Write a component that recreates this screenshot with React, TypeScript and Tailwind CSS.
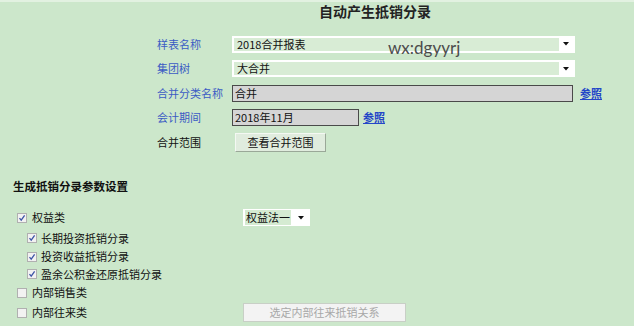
import React from "react";

function Check({ checked }: { checked?: boolean }) {
  return (
    <span className="w-[10px] h-[10px] border border-[#b0b0b0] bg-[#f2f2f2] flex items-center justify-center shrink-0">
      {checked && (
        <svg width="8" height="8" viewBox="0 0 8 8">
          <path d="M1.5 4.2 L3.2 6.2 L6.6 1.4" stroke="#3d55a6" strokeWidth="1.3" fill="none" />
        </svg>
      )}
    </span>
  );
}

function Arrow() {
  return (
    <svg width="6" height="4" viewBox="0 0 6 4">
      <path d="M0 0 L6 0 L3 3.5 Z" fill="#111" />
    </svg>
  );
}

function Select({ text, w }: { text: string; w: string }) {
  return (
    <div className={`${w} h-[17px] border-2 border-white bg-[#d8ecd5] flex items-center`}>
      <span className="flex-1 pl-[3px] text-[11px] leading-none text-[#111]">{text}</span>
      <span className="w-[14px] h-full bg-white flex items-center justify-center">
        <Arrow />
      </span>
    </div>
  );
}

function Label({ children, blue = true }: { children: React.ReactNode; blue?: boolean }) {
  return (
    <span className={`w-[75px] text-[11px] leading-none ${blue ? "text-[#3b5bc4]" : "text-[#111]"}`}>{children}</span>
  );
}

export default function App() {
  return (
    <div className="relative w-[634px] h-[326px] overflow-hidden bg-[#cce7cb] font-['Noto_Sans_CJK_SC','Liberation_Sans',sans-serif] text-[#111]">
      <div className="h-[2px] bg-[#e2f1e1]" />
      <div className="h-[18px] flex items-center pl-[319px] text-[14px] font-bold text-[#222] leading-none">
        自动产生抵销分录
      </div>
      <div className="h-[12px]" />
      <div className="pl-[157px]">
        <div className="h-[24px] flex items-center">
          <Label>样表名称</Label>
          <Select text="2018合并报表" w="w-[343px]" />
        </div>
        <div className="h-[25px] flex items-center">
          <Label>集团树</Label>
          <Select text="大合并" w="w-[343px]" />
        </div>
        <div className="h-[24px] flex items-center">
          <Label>合并分类名称</Label>
          <div className="w-[341px] h-[17px] border border-[#4a4a4a] bg-[#d5d5d5] flex items-center pl-[2px] text-[11px] leading-none">
            合并
          </div>
          <span className="ml-[7px] text-[11px] leading-none text-[#2446c8] underline font-bold">参照</span>
        </div>
        <div className="h-[25px] flex items-center">
          <Label>会计期间</Label>
          <div className="w-[127px] h-[17px] border border-[#4a4a4a] bg-[#d5d5d5] flex items-center pl-[2px] text-[11px] leading-none">
            2018年11月
          </div>
          <span className="ml-[4px] text-[11px] leading-none text-[#2446c8] underline font-bold">参照</span>
        </div>
        <div className="h-[24px] flex items-center">
          <Label blue={false}>合并范围</Label>
          <div className="ml-[3px] w-[91px] h-[19px] border border-t-[#f4f8f3] border-l-[#f4f8f3] border-r-[#9aa898] border-b-[#9aa898] bg-[#e0ecde] flex items-center justify-center text-[11px] leading-none">
            查看合并范围
          </div>
        </div>
      </div>
      <div className="h-[21px]" />
      <div className="pl-[13px] h-[24px] flex items-center text-[11.5px] font-bold leading-none text-[#111]">
        生成抵销分录参数设置
      </div>
      <div className="h-[8px]" />
      <div className="pl-[17px] text-[11px] leading-none whitespace-nowrap">
        <div className="h-[21px] flex items-center">
          <div className="w-[226px] flex items-center gap-[5px]">
            <Check checked />
            <span>权益类</span>
          </div>
          <div className="w-[67px] h-[17px] bg-white flex items-center">
            <span className="ml-[2px] w-[46px] h-[15px] bg-[#d5ebd2] flex items-center pl-[1px] whitespace-nowrap">权益法一</span>
            <span className="flex-1 flex items-center justify-center">
              <Arrow />
            </span>
          </div>
        </div>
        <div className="pl-[10px]">
          <div className="h-[20px] flex items-center gap-[4px]">
            <Check checked />
            <span>长期投资抵销分录</span>
          </div>
          <div className="h-[17px] flex items-center gap-[4px]">
            <Check checked />
            <span>投资收益抵销分录</span>
          </div>
          <div className="h-[18px] flex items-center gap-[4px]">
            <Check checked />
            <span>盈余公积金还原抵销分录</span>
          </div>
        </div>
        <div className="h-[19px] flex items-center gap-[5px]">
          <Check />
          <span>内部销售类</span>
        </div>
        <div className="h-[21px] flex items-center">
          <div className="w-[226px] flex items-center gap-[5px]">
            <Check />
            <span>内部往来类</span>
          </div>
          <div className="w-[163px] h-[19px] border border-[#c8cfc6] bg-[#f3f3f3] flex items-center justify-center text-[#a8a8a8]">
            选定内部往来抵销关系
          </div>
        </div>
      </div>
      <div className="absolute left-[388px] top-[39px] text-[17px] leading-none text-[#4d4d4d] font-['Lato','Liberation_Sans',sans-serif]">
        wx:dgyyrj
      </div>
    </div>
  );
}
